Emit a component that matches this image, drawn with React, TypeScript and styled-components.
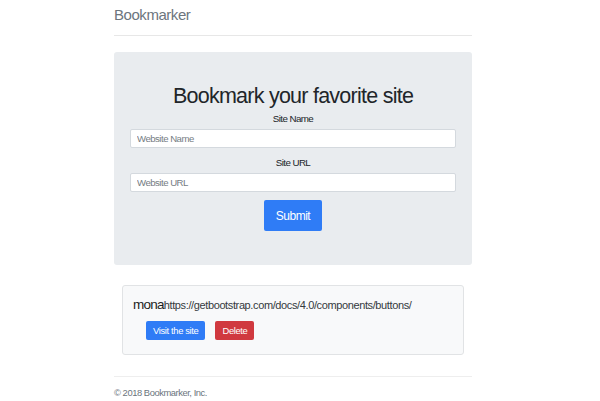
import React from "react";
import styled, { createGlobalStyle } from "styled-components";

const GlobalStyle = createGlobalStyle`
  html, body { margin: 0; padding: 0; background: #ffffff; }
  body {
    font-family: "Liberation Sans", Arial, Helvetica, sans-serif;
    color: #212529;
    -webkit-font-smoothing: antialiased;
  }
  * { box-sizing: border-box; }
`;

const Container = styled.div`
  width: 358px;
  margin-left: 114px;
  display: flex;
  flex-direction: column;
`;

const Header = styled.header`
  height: 36px;
  border-bottom: 1px solid #e7e7e7;
  padding-top: 6px;
`;

const Brand = styled.h3`
  margin: 0;
  font-size: 15px;
  line-height: 18px;
  font-weight: 400;
  letter-spacing: -0.45px;
  color: #6c757d;
`;

const Jumbotron = styled.section`
  margin-top: 16px;
  height: 213px;
  background: #e9ecef;
  border-radius: 3px;
  padding: 32px 16px 0;
  display: flex;
  flex-direction: column;
  align-items: stretch;
`;

const Title = styled.h1`
  margin: 0;
  text-align: center;
  font-size: 21.5px;
  line-height: 24px;
  font-weight: 400;
  letter-spacing: -0.75px;
  color: #212529;
`;

const Form = styled.form`
  display: flex;
  flex-direction: column;
  align-items: stretch;
`;

const Group = styled.div<{ $top: number }>`
  margin-top: ${(p) => p.$top}px;
  display: flex;
  flex-direction: column;
  align-items: stretch;
  gap: 4px;
`;

const Label = styled.label`
  text-align: center;
  font-size: 9.8px;
  line-height: 13px;
  letter-spacing: -0.6px;
  color: #212529;
`;

const Input = styled.input`
  height: 19px;
  width: 100%;
  border: 1px solid #d4d9de;
  border-radius: 2px;
  background: #ffffff;
  padding: 0 6px;
  font-family: "Liberation Sans", Arial, sans-serif;
  font-size: 9.6px;
  letter-spacing: -0.5px;
  color: #495057;
  outline: none;
  &::placeholder { color: #757c83; }
`;

const SubmitRow = styled.div`
  margin-top: 8px;
  display: flex;
  justify-content: center;
`;

const Button = styled.button<{ $variant: "primary" | "danger"; $size: "lg" | "sm" }>`
  border: none;
  border-radius: 2px;
  color: #ffffff;
  font-family: "Liberation Sans", Arial, sans-serif;
  background: ${(p) => (p.$variant === "primary" ? "#2f7cf6" : "#d0393f")};
  height: ${(p) => (p.$size === "lg" ? 31 : 19)}px;
  padding: 0 ${(p) => (p.$size === "lg" ? 0 : 7)}px;
  width: ${(p) => (p.$size === "lg" ? "58px" : "auto")};
  font-size: ${(p) => (p.$size === "lg" ? 12 : 9.4)}px;
  letter-spacing: ${(p) => (p.$size === "lg" ? -0.5 : -0.35)}px;
  line-height: 1;
  cursor: pointer;
`;

const Card = styled.div`
  margin: 20px 8px 0;
  height: 70px;
  background: #f8f9fa;
  border: 1px solid #e1e3e5;
  border-radius: 3px;
  padding: 10px 10px 0;
  display: flex;
  flex-direction: column;
`;

const SiteLine = styled.div`
  line-height: 15px;
  white-space: nowrap;
`;

const SiteName = styled.span`
  font-size: 13.5px;
  letter-spacing: -0.75px;
  color: #1b1e21;
`;

const SiteUrl = styled.span`
  font-size: 11px;
  letter-spacing: -0.38px;
  color: #343a40;
`;

const Actions = styled.div`
  margin: 8px 0 0 13px;
  display: flex;
  gap: 10px;
`;

const Footer = styled.footer`
  margin-top: 21px;
  border-top: 1px solid #eeeeee;
  padding-top: 9px;
`;

const Copy = styled.p`
  margin: 0;
  font-size: 9.4px;
  line-height: 13px;
  letter-spacing: -0.45px;
  color: #6c757d;
`;

export default function App() {
  return (
    <>
      <GlobalStyle />
      <Container>
        <Header>
          <Brand>Bookmarker</Brand>
        </Header>
        <Jumbotron>
          <Title>Bookmark your favorite site</Title>
          <Form onSubmit={(e) => e.preventDefault()}>
            <Group $top={4}>
              <Label htmlFor="siteName">Site Name</Label>
              <Input id="siteName" type="text" placeholder="Website Name" />
            </Group>
            <Group $top={8}>
              <Label htmlFor="siteUrl">Site URL</Label>
              <Input id="siteUrl" type="text" placeholder="Website URL" />
            </Group>
            <SubmitRow>
              <Button type="submit" $variant="primary" $size="lg">
                Submit
              </Button>
            </SubmitRow>
          </Form>
        </Jumbotron>
        <Card>
          <SiteLine>
            <SiteName>mona</SiteName>
            <SiteUrl>https://getbootstrap.com/docs/4.0/components/buttons/</SiteUrl>
          </SiteLine>
          <Actions>
            <Button type="button" $variant="primary" $size="sm">
              Visit the site
            </Button>
            <Button type="button" $variant="danger" $size="sm">
              Delete
            </Button>
          </Actions>
        </Card>
        <Footer>
          <Copy>© 2018 Bookmarker, Inc.</Copy>
        </Footer>
      </Container>
    </>
  );
}
